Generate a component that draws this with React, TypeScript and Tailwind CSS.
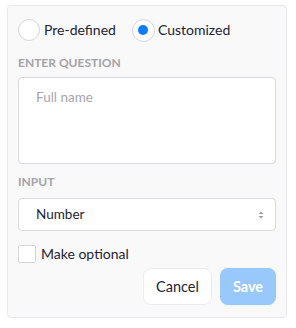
import React from "react";

export default function App() {
  return (
    <div className="w-[296px] h-[328px] bg-white pt-[5px] pl-[7px]" style={{ fontFamily: "Lato, 'Noto Sans', sans-serif" }}>
      <div className="w-[280px] h-[313px] bg-[#f9f9fa] border border-[#e8e8ee] rounded-[4px] px-[10px] pt-[13px] flex flex-col">
        <div className="flex items-center h-[22px] leading-[22px]">
          <div className="w-[22px] h-[22px] rounded-full border border-[#d6d6d6] bg-white" />
          <span className="ml-[4px] text-[14px] text-[#1d2433]">Pre-defined</span>
          <div className="ml-[16px] w-[23px] h-[23px] rounded-full border border-[#d6d6d6] bg-white flex items-center justify-center">
            <div className="w-[10px] h-[10px] rounded-full bg-[#0b7bff]" />
          </div>
          <span className="ml-[3px] text-[14px] text-[#1d2433]">Customized</span>
        </div>
        <div className="mt-[15px] text-[12px] font-bold text-[#a3a3a8] leading-[14px]">ENTER QUESTION</div>
        <div className="mt-[7px] h-[87px] bg-white border border-[#d9d9de] rounded-[4px] px-[17px] pt-[9px] leading-[18px]">
          <span className="text-[13.5px] text-[#a6a6ab]">Full name</span>
        </div>
        <div className="mt-[11px] text-[12px] font-bold text-[#a3a3a8] leading-[14px]">INPUT</div>
        <div className="mt-[9px] h-[33px] bg-white border border-[#d9d9de] rounded-[4px] pl-[17px] pr-[10px] flex items-center justify-between">
          <span className="text-[13.5px] text-[#1d2433]">Number</span>
          <svg width="8" height="10" viewBox="0 0 8 10">
            <path d="M1.5 4 L4 1.5 L6.5 4 Z" fill="#9a9aa0" />
            <path d="M1.5 6 L4 8.5 L6.5 6 Z" fill="#9a9aa0" />
          </svg>
        </div>
        <div className="mt-[14px] flex items-center h-[18px]">
          <div className="w-[18px] h-[18px] border border-[#d6d6d6] bg-white rounded-[2px]" />
          <span className="ml-[5px] text-[14px] text-[#1d2433] leading-[18px]">Make optional</span>
        </div>
        <div className="mt-[5px] flex justify-end gap-[8px]">
          <button className="w-[69px] h-[37px] bg-white border border-[#ececef] rounded-[8px] text-[14.5px] text-[#1d2433]">Cancel</button>
          <button className="w-[56px] h-[37px] bg-[#99c8fd] rounded-[8px] text-[14.5px] font-bold text-white">Save</button>
        </div>
      </div>
    </div>
  );
}
